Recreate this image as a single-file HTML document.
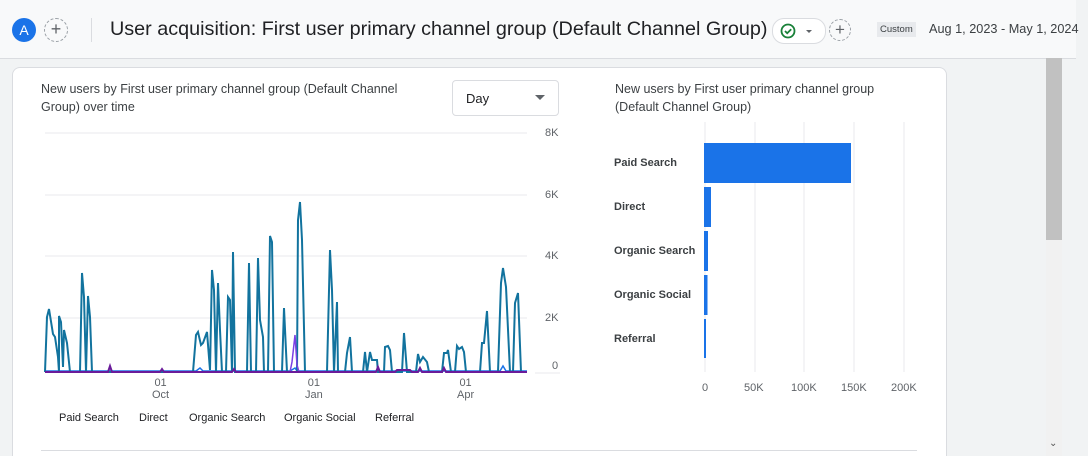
<!DOCTYPE html>
<html><head><meta charset="utf-8"><style>
html,body{margin:0;width:1088px;height:456px;overflow:hidden}
body{background:#f1f3f4;font-family:"Liberation Sans",sans-serif;position:relative}
.hdr{position:absolute;left:0;top:0;width:1076px;height:58px;background:#f8f9fa;border-bottom:1px solid #dadce0}
.card{position:absolute;left:12px;top:67px;width:933px;height:389px;background:#fff;border:1px solid #dadce0;border-bottom:none;border-radius:8px 8px 0 0}
.t{position:absolute;font-size:12.5px;color:#3c4043;line-height:18px}
.ax{position:absolute;font-size:11px;color:#5f6368;white-space:nowrap}
</style></head><body>
<div class="hdr">
 <div style="position:absolute;left:12px;top:18px;width:24px;height:24px;border-radius:50%;background:#1a73e8;color:#fff;font-size:14px;text-align:center;line-height:24px">A</div>
 <div style="position:absolute;left:44px;top:18px;width:22px;height:22px;border-radius:50%;border:1px dashed #9aa0a6;color:#5f6368;text-align:center;line-height:21px;font-size:18px">+</div>
 <div style="position:absolute;left:91px;top:18px;width:1px;height:24px;background:#dadce0"></div>
 <div style="position:absolute;left:110px;top:18px;font-size:19.8px;color:#202124;white-space:nowrap">User acquisition: First user primary channel group (Default Channel Group)</div>
 <div style="position:absolute;left:772px;top:18px;width:52px;height:24px;border-radius:12px;border:1px solid #dadce0;background:#fff"><svg width="52" height="24"><circle cx="15" cy="12" r="6.5" fill="none" stroke="#188038" stroke-width="1.8"/><path d="M12 12l2.2 2.2 4-4" fill="none" stroke="#188038" stroke-width="1.8"/><path d="M33 11h6l-3 3z" fill="#5f6368"/></svg></div>
 <div style="position:absolute;left:829px;top:19px;width:20px;height:20px;border-radius:50%;border:1px dashed #9aa0a6;color:#5f6368;text-align:center;line-height:19px;font-size:17px">+</div>
 <div style="position:absolute;left:877px;top:22px;padding:2px 3px;background:#e8eaed;font-size:9.5px;color:#3c4043">Custom</div>
 <div style="position:absolute;left:929px;top:22px;font-size:12.7px;color:#3c4043;white-space:nowrap">Aug 1, 2023 - May 1, 2024</div>
</div>
<div class="card">
 <div class="t" style="left:28px;top:12px;width:380px">New users by First user primary channel group (Default Channel Group) over time</div>
 <div style="position:absolute;left:439px;top:12px;width:105px;height:34px;border:1px solid #dadce0;border-radius:4px"><span style="position:absolute;left:13px;top:10px;font-size:13px;color:#202124">Day</span><svg style="position:absolute;left:82px;top:14px" width="10" height="6"><path d="M0 0h10L5 5z" fill="#5f6368"/></svg></div>
 <div class="t" style="left:602px;top:12px;width:300px">New users by First user primary channel group (Default Channel Group)</div>
 <div style="position:absolute;left:28px;top:382px;width:876px;height:1px;background:#dadce0"></div>
</div>
<div style="position:absolute;left:1046px;top:58px;width:16px;height:398px;background:#f1f1f1"></div>
<div style="position:absolute;left:1046px;top:58px;width:16px;height:182px;background:#c1c1c1"></div>
<div style="position:absolute;left:1049px;top:438px;font-size:10px;color:#555">⌄</div>
<svg style="position:absolute;left:0;top:0" width="1088" height="456">
 <g stroke="#e8eaed" stroke-width="1"><line x1="45" y1="133" x2="527" y2="133"/><line x1="45" y1="195" x2="527" y2="195"/><line x1="45" y1="256" x2="527" y2="256"/><line x1="45" y1="318" x2="527" y2="318"/><line x1="535" y1="373" x2="560" y2="373"/>
 <line x1="705" y1="122" x2="705" y2="372"/><line x1="755" y1="122" x2="755" y2="372"/><line x1="804" y1="122" x2="804" y2="372"/><line x1="854" y1="122" x2="854" y2="372"/><line x1="904" y1="122" x2="904" y2="372"/></g>
 <polyline fill="none" stroke="#1a73e8" stroke-width="1.5" points="45,371 196,371 200,368 203,371 290,371 295,368 297,371 500,371 503,366 506,371 527,371"/>
 <polyline fill="none" stroke="#12739e" stroke-width="2" points="45,372 47,317 49,309 53,334 55,337 58,357 59,372 59,316 61,322 63,367 64,330 67,343 70,372 80,372 82,273 84,297 86,372 88,296 90,317 92,372 193,372 196,335 198,332 201,345 203,343 207,332 210,370 212,270 214,290 216,372 218,283 220,330 222,372 226,372 228,297 230,300 232,372 233,252 235,372 247,372 249,263 251,372 256,372 258,258 260,320 263,337 264,372 268,372 270,236 272,242 274,372 282,372 284,308 287,372 297,372 298,220 300,202 302,240 305,372 327,372 330,250 332,290 334,372 337,302 338,372 345,372 347,353 350,337 352,372 363,372 365,352 367,372 370,352 372,360 377,360 378,372 384,372 385,347 388,346 390,350 392,372 402,372 404,333 407,372 416,372 418,354 420,362 423,357 427,362 429,372 442,372 444,353 447,353 448,350 451,372 455,372 457,346 459,349 462,347 464,352 466,372 480,372 482,343 484,343 487,311 490,372 498,372 501,283 503,268 506,287 510,372 513,372 515,303 518,293 521,372 527,372"/>
 <polyline fill="none" stroke="#7b3fe4" stroke-width="1.5" points="290,372 292,362 295,335 297,365 299,372"/>
 <polyline fill="none" stroke="#6a1b9a" stroke-width="2" points="45,372 108,372 110,366 112,372 160,372 162,369 164,372 232,372 234,369 236,372 376,372 378,367 380,372 395,372 397,370 410,370 412,372 418,372 420,368 422,372 442,372 444,368 446,372 527,372"/>
 <rect x="704" y="143" width="147" height="40" fill="#1a73e8"/>
 <rect x="704" y="187" width="7" height="40" fill="#1a73e8"/>
 <rect x="704" y="231" width="4" height="40" fill="#1a73e8"/>
 <rect x="704" y="275" width="3.5" height="40" fill="#1a73e8"/>
 <rect x="704" y="319" width="2" height="39" fill="#1a73e8"/>
</svg>
<div class="ax" style="left:545px;top:127px">8K</div>
<div class="ax" style="left:545px;top:189px">6K</div>
<div class="ax" style="left:545px;top:250px">4K</div>
<div class="ax" style="left:545px;top:312px">2K</div>
<div class="ax" style="left:552px;top:360px">0</div>
<div class="ax" style="left:152px;top:377px;text-align:center;line-height:12px">01<br>Oct</div>
<div class="ax" style="left:305px;top:377px;text-align:center;line-height:12px">01<br>Jan</div>
<div class="ax" style="left:457px;top:377px;text-align:center;line-height:12px">01<br>Apr</div>
<div class="ax" style="left:59px;top:412px;color:#202124">Paid Search</div>
<div class="ax" style="left:139px;top:412px;color:#202124">Direct</div>
<div class="ax" style="left:189px;top:412px;color:#202124">Organic Search</div>
<div class="ax" style="left:284px;top:412px;color:#202124">Organic Social</div>
<div class="ax" style="left:375px;top:412px;color:#202124">Referral</div>
<div class="ax" style="left:614px;top:157px;color:#3c4043;font-weight:bold">Paid Search</div>
<div class="ax" style="left:614px;top:201px;color:#3c4043;font-weight:bold">Direct</div>
<div class="ax" style="left:614px;top:245px;color:#3c4043;font-weight:bold">Organic Search</div>
<div class="ax" style="left:614px;top:289px;color:#3c4043;font-weight:bold">Organic Social</div>
<div class="ax" style="left:614px;top:333px;color:#3c4043;font-weight:bold">Referral</div>
<div class="ax" style="left:702px;top:382px">0</div>
<div class="ax" style="left:744px;top:382px">50K</div>
<div class="ax" style="left:791px;top:382px">100K</div>
<div class="ax" style="left:841px;top:382px">150K</div>
<div class="ax" style="left:891px;top:382px">200K</div>
</body></html>
